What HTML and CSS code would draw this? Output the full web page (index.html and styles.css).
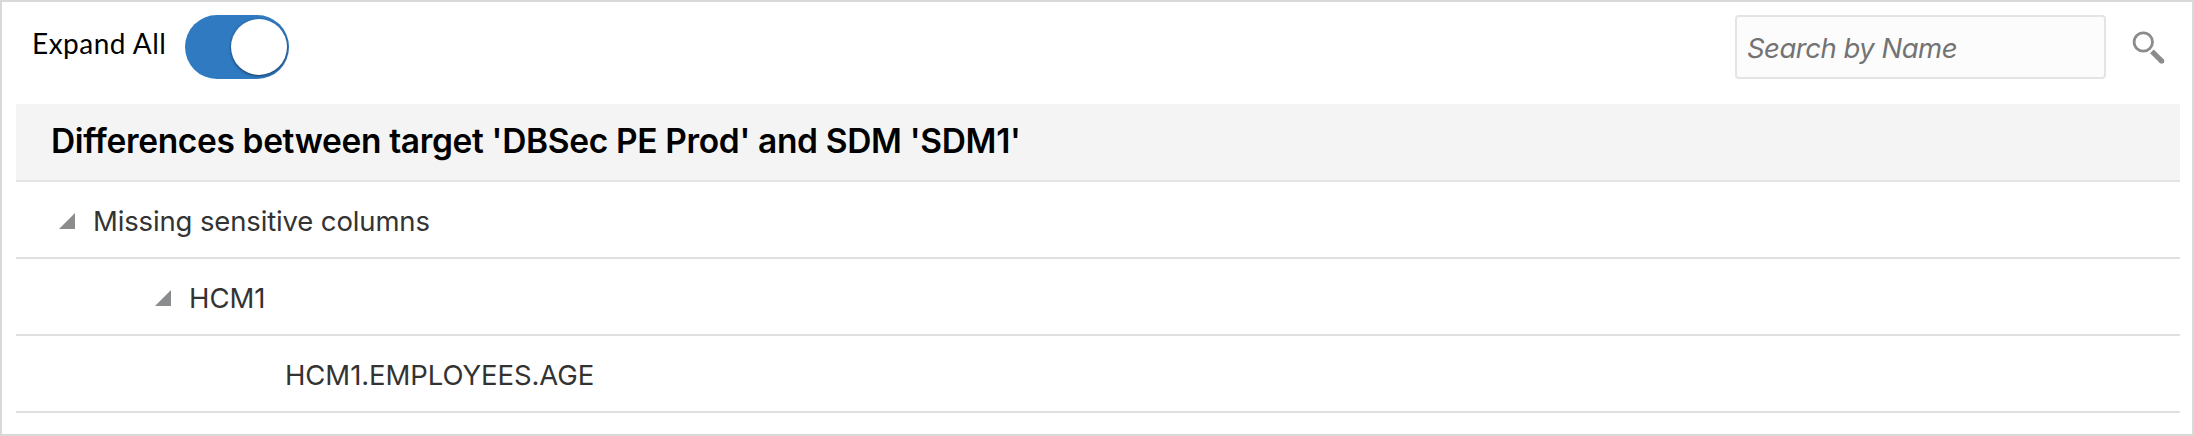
FILE: index.html
```html
<!DOCTYPE html>
<html lang="en">
<head>
<meta charset="utf-8">
<title>Differences</title>
<link rel="stylesheet" href="styles.css">
</head>
<body>
<main class="panel">
  <div class="toolbar">
    <span class="toggle-label">Expand All</span>
    <span class="toggle" role="switch" aria-checked="true" aria-label="Expand All"><span class="knob"></span></span>
    <div class="search"><span class="placeholder">Search by Name</span></div>
    <svg class="search-icon" viewBox="0 0 34 34" aria-hidden="true">
      <circle cx="11.3" cy="11" r="9.2" fill="none" stroke="#8b8c8e" stroke-width="2.8"/>
      <path d="M19.9 20.4 L30 30.3" fill="none" stroke="#8b8c8e" stroke-width="5.2"/>
      <circle cx="29.7" cy="30" r="2.6" fill="#8b8c8e"/>
    </svg>
  </div>
  <section class="tree">
    <h1 class="title"><span class="title-text">Differences between target 'DBSec PE Prod' and SDM 'SDM1'</span></h1>
    <div class="row level-1"><svg class="arrow" viewBox="0 0 16 16"><path d="M16 0V16H0Z"/></svg><span class="missing">Missing sensitive columns</span></div>
    <div class="row level-2"><svg class="arrow" viewBox="0 0 16 16"><path d="M16 0V16H0Z"/></svg><span class="schema">HCM1</span></div>
    <div class="row level-3"><span class="column">HCM1.EMPLOYEES.AGE</span></div>
  </section>
</main>
</body>
</html>
```
FILE: styles.css
```css
* { box-sizing: border-box; }
body { margin: 0; background: #fff; font-family: Inter, "Liberation Sans", sans-serif; }
.panel { width: 2194px; height: 436px; border: 2px solid #d9d9d9; overflow: hidden; }
.toolbar { display: flex; align-items: flex-start; height: 102px; padding: 13px 26px 0 30px; }
.toggle-label { width: 153px; padding-top: 11px; font: 28px/34px Lato, sans-serif; letter-spacing: 0.5px; color: #000; white-space: nowrap; }
.toggle { display: flex; width: 104px; height: 64px; padding: 4px 2px 4px 46px; border-radius: 32px; background: #307ac2; }
.knob { width: 56px; height: 56px; border-radius: 50%; background: #fff; box-shadow: 0 1px 3px rgba(0, 0, 0, 0.55); }
.search { display: flex; align-items: center; width: 371px; height: 64px; margin-left: auto; padding: 2px 0 0 10px; border: 2px solid #e4e4e4; border-radius: 4px; background: #fcfcfc; }
.placeholder { font-size: 27.5px; line-height: 34px; font-style: italic; font-weight: 450; letter-spacing: -0.5px; color: #737373; white-space: nowrap; }
.search-icon { flex: none; width: 34px; height: 34px; margin: 16px 0 0 26px; }
.tree { margin: 0 12px 0 14px; }
.title { display: flex; align-items: center; height: 78px; margin: 0; padding: 0 0 2px 35px; border-bottom: 2px solid #e4e4e4; background: #f4f4f4; font-size: 33.5px; line-height: 40px; font-weight: 600; letter-spacing: -0.34px; color: #000; white-space: nowrap; }
.row { display: flex; align-items: center; height: 77px; padding-top: 3px; border-bottom: 2px solid #e0e0e0; font-size: 27.5px; line-height: 34px; color: #333; white-space: nowrap; }
.arrow { width: 16px; height: 16px; margin-right: 18px; fill: #8b8c8e; }
.missing { letter-spacing: -0.14px; }
.column { letter-spacing: -0.08px; }
.level-1 { padding-left: 43px; }
.level-2 { padding-left: 139px; }
.level-3 { padding-left: 269px; }
```
